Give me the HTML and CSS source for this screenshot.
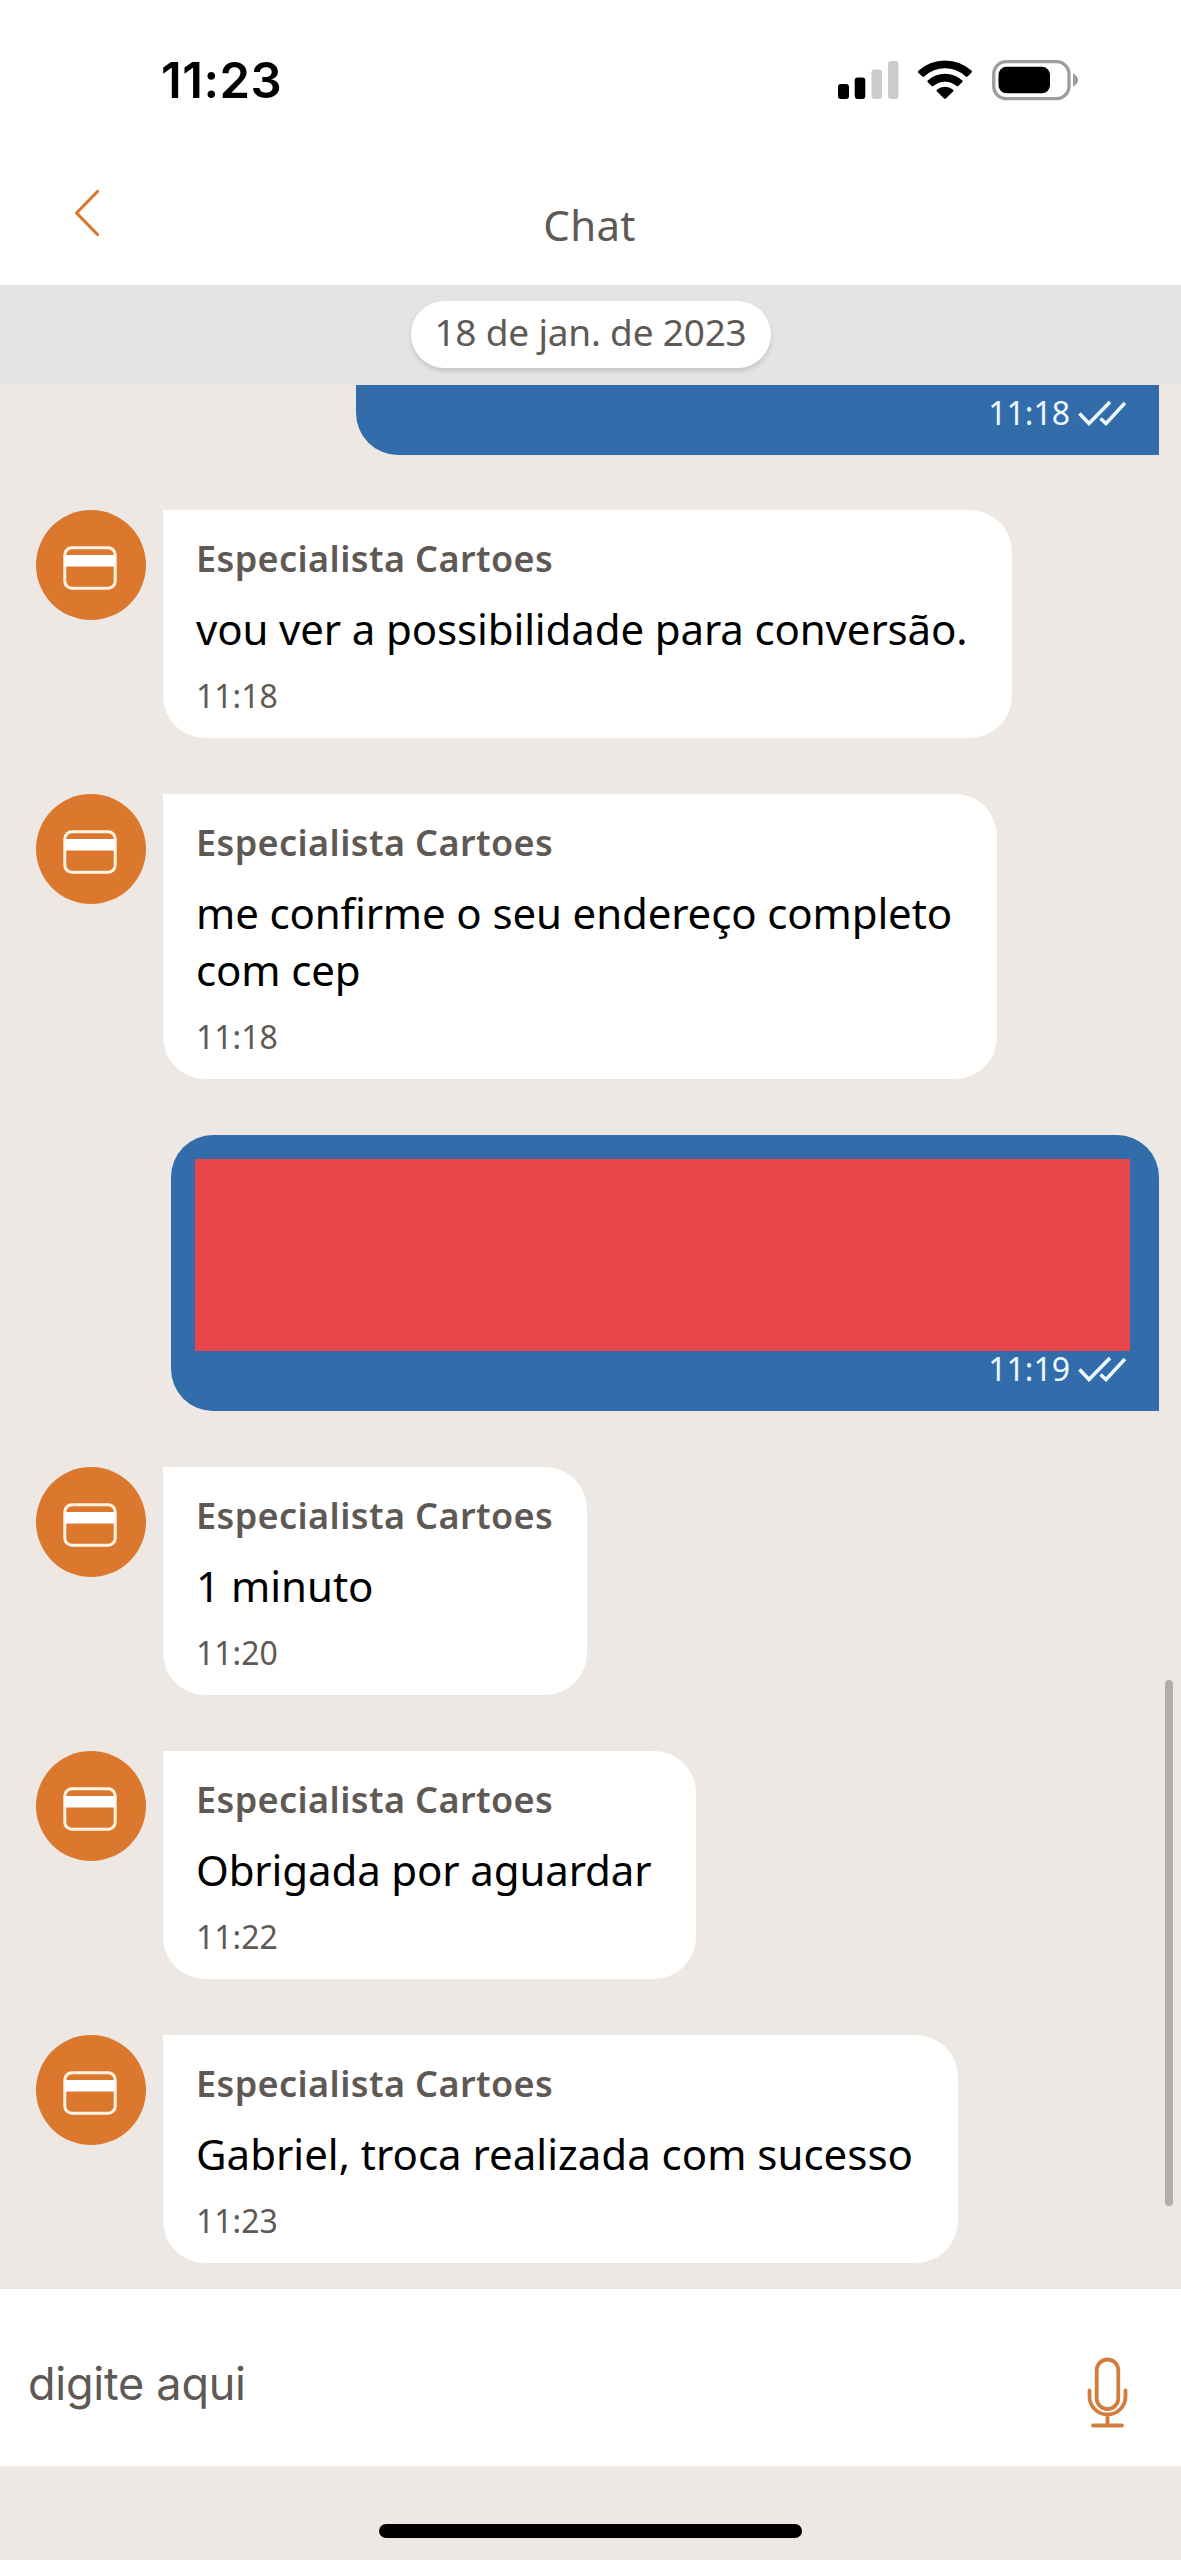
FILE: index.html
```
<!DOCTYPE html>
<html lang="pt-BR">
<head>
    <meta charset="UTF-8">
    <meta name="viewport" content="width=device-width, initial-scale=1.0">
    <title>Chat</title>
    <link rel="stylesheet" href="styles.css">
</head>
<body>

<!-- Shared icons -->
<svg class="icon-defs" width="0" height="0">
    <symbol id="card" viewBox="0 0 54 44">
        <rect x="1.8" y="1.8" width="50.4" height="40.4" rx="7" fill="none" stroke="#fff3e2" stroke-width="3"/>
        <rect x="1.5" y="9" width="51" height="11.5" fill="#fff"/>
    </symbol>
    <symbol id="checks" viewBox="0 0 48 26">
        <path d="M1.5 13.5L11 23.5L32 2M22.5 18.500L28 23.5L47 3" fill="none" stroke="#eef8ff" stroke-width="3.600"/>
    </symbol>
</svg>

<div class="status-bar">
    <span class="clock">11:23</span>
    <div class="status-icons">
        <svg width="60" height="40" viewBox="0 0 60 40">
            <rect x="0" y="24" width="11" height="15" rx="3"/>
            <rect x="16.7" y="17.5" width="10.6" height="21.5" rx="3"/>
            <rect x="33.5" y="9.5" width="10.5" height="29.5" rx="3" fill="#cbcbcb"/>
            <rect x="50" y="1" width="10.5" height="38" rx="3" fill="#cbcbcb"/>
        </svg>
        <svg width="54" height="40" viewBox="0 0 54 40">
            <path d="M0 12.5Q-.4 11.5 .6 10.6Q12 .5 27 .5T53.4 10.6Q54.4 11.5 53.6 12.5L49.6 16.5Q48.8 17.2 47.8 16.4Q38.5 8.3 27 8.3T6.2 16.4Q5.2 17.2 4.4 16.5Z"/>
            <path d="M9.6 21.9Q9 21 9.9 20.2Q17 13.7 27 13.7T44.1 20.2Q45 21 44.4 21.9L40.3 26Q39.5 26.7 38.6 26Q33.5 21.7 27 21.7T15.4 26Q14.5 26.7 13.7 26Z"/>
            <path d="M18.8 31.2Q18.3 30.3 19.1 29.6Q22.5 26.8 27 26.8T34.9 29.6Q35.7 30.3 35.2 31.2L27.9 38.6Q27 39.4 26.1 38.6Z"/>
        </svg>
        <svg width="88" height="40" viewBox="0 0 88 40">
            <rect x="1.700" y="1.700" width="75.3" height="37" rx="12.5" fill="#fff" stroke="#9d9d9d" stroke-width="3.300"/>
            <rect x="6.5" y="6.8" width="51.5" height="26.5" rx="8"/>
            <path d="M81 13.5Q86 16 86 20T81 26.5Z" fill="#9d9d9d"/>
        </svg>
    </div>
</div>

<div class="navbar">
    <svg class="back" width="26" height="48" viewBox="0 0 26 48">
        <path d="M23.5 2.5L2.5 24L23.5 45.5" fill="none" stroke="#d9772f" stroke-width="3.200" stroke-linecap="round" stroke-linejoin="round"/>
    </svg>
    <h1>Chat</h1>
</div>

<div class="date-bar">
    <span class="date">18 de jan. de 2023</span>
</div>

<div class="messages">
    <div class="bubble sent cut">
        <div class="sent-time">11:18 <svg width="48" height="26"><use href="#checks"/></svg></div>
    </div>

    <div class="message">
        <div class="avatar"><svg width="54" height="44"><use href="#card"/></svg></div>
        <div class="bubble received">
            <h2>Especialista Cartoes</h2>
            <p class="snug">vou ver a possibilidade para conversão.</p>
            <span class="time">11:18</span>
        </div>
    </div>

    <div class="message">
        <div class="avatar"><svg width="54" height="44"><use href="#card"/></svg></div>
        <div class="bubble received">
            <h2>Especialista Cartoes</h2>
            <p class="snug">me confirme o seu endereço completo<br>com cep</p>
            <span class="time">11:18</span>
        </div>
    </div>

    <div class="bubble sent">
        <div class="redacted"></div>
        <div class="sent-time">11:19 <svg width="48" height="26"><use href="#checks"/></svg></div>
    </div>

    <div class="message">
        <div class="avatar"><svg width="54" height="44"><use href="#card"/></svg></div>
        <div class="bubble received">
            <h2>Especialista Cartoes</h2>
            <p>1 minuto</p>
            <span class="time">11:20</span>
        </div>
    </div>

    <div class="message">
        <div class="avatar"><svg width="54" height="44"><use href="#card"/></svg></div>
        <div class="bubble received">
            <h2>Especialista Cartoes</h2>
            <p class="snug">Obrigada por aguardar</p>
            <span class="time">11:22</span>
        </div>
    </div>

    <div class="message">
        <div class="avatar"><svg width="54" height="44"><use href="#card"/></svg></div>
        <div class="bubble received">
            <h2>Especialista Cartoes</h2>
            <p>Gabriel, troca realizada com sucesso</p>
            <span class="time">11:23</span>
        </div>
    </div>

    <div class="scrollbar"></div>
</div>

<div class="composer">
    <span class="placeholder">digite aqui</span>
    <svg class="mic" width="42" height="72" viewBox="0 0 42 72">
        <g fill="none" stroke="#d27d3c" stroke-width="3.8" stroke-linecap="round">
            <rect x="9.7" y="2.5" width="21.6" height="49.5" rx="10.8"/>
            <path d="M2.5 33.5V39.5A18 18 0 0 0 38.5 39.5V33.5M20.5 58V68.5M6 68.5H35"/>
        </g>
    </svg>
</div>

<div class="home-area">
    <div class="home-indicator"></div>
</div>

</body>
</html>
```
FILE: styles.css
```
body {
    font-family: "Noto Sans", "Open Sans", sans-serif;
    margin: 0;
    padding: 0;
    height: 2560px;
    display: flex;
    flex-direction: column;
    background-color: #ede8e4;
    color: #5f5955;
}
svg {
    display: block;
}
.icon-defs {
    position: absolute;
}
.status-bar {
    display: flex;
    justify-content: space-between;
    align-items: center;
    height: 160px;
    padding: 0 101px 0 161px;
    background-color: #fff;
    color: #000;
}
.clock {
    font-family: Inter, sans-serif;
    font-size: 49px;
    font-weight: 600;
    letter-spacing: 0.5px;
}
.status-icons {
    display: flex;
    gap: 20px;
    margin-bottom: 1px;
}
.status-icons svg {
    overflow: visible;
}
.navbar {
    display: grid;
    grid-template-columns: 1fr auto 1fr;
    height: 125px;
    padding: 0 76px 0 74px;
    box-sizing: border-box;
    background-color: #fff;
}
.back {
    margin-top: 29px;
}
.navbar h1 {
    margin: 37px 0 0;
    font-size: 42px;
    font-weight: 400;
    line-height: 56px;
    letter-spacing: 0.3px;
}
.date-bar {
    display: flex;
    justify-content: center;
    align-items: flex-start;
    height: 100px;
    padding-top: 16px;
    box-sizing: border-box;
    background-color: #e4e4e4;
}
.date {
    width: 360px;
    height: 67px;
    border-radius: 34px;
    background-color: #fff;
    box-shadow: 0 3px 5px rgba(0, 0, 0, 0.14);
    font-size: 37px;
    line-height: 61px;
    letter-spacing: -0.2px;
    text-align: center;
}
.messages {
    position: relative;
    display: flex;
    flex-direction: column;
    gap: 55.7px;
    height: 1903.6px;
    padding: 0 22px 0 36px;
    box-sizing: border-box;
}
.message {
    display: flex;
    align-items: flex-start;
    gap: 17px;
}
.avatar {
    display: flex;
    justify-content: center;
    align-items: center;
    width: 110px;
    height: 110px;
    padding: 5px 3px 0 0;
    box-sizing: border-box;
    border-radius: 50%;
    background-color: #dc782e;
}
.bubble {
    border-radius: 42px;
    box-sizing: border-box;
}
.received {
    padding: 24px 34px 20.3px 33px;
    border-top-left-radius: 0;
    background-color: #fff;
}
.received h2 {
    margin: 0;
    font-size: 36px;
    font-weight: 600;
    line-height: 50px;
    letter-spacing: 0.4px;
}
.received p {
    margin: 16px 11px 17px 0;
    color: #000;
    font-size: 42px;
    line-height: 57px;
}
.received .snug {
    letter-spacing: -0.13px;
}
.time {
    display: block;
    font-size: 32px;
    line-height: 44px;
}
.sent {
    align-self: flex-end;
    width: 988px;
    height: 276.3px;
    padding: 24px 29px 0 24px;
    border-bottom-right-radius: 0;
    background-color: #326cab;
}
/* Bubble scrolled under the date bar */
.sent.cut {
    width: 803px;
    height: 69.5px;
    padding-top: 10px;
    border-top-left-radius: 0;
    border-top-right-radius: 0;
}
.redacted {
    height: 192px;
    background-color: #e8464a;
}
.sent-time {
    display: flex;
    justify-content: flex-end;
    align-items: center;
    gap: 8px;
    padding-right: 4px;
    color: #eef8ff;
    font-size: 32px;
    line-height: 36px;
}
.scrollbar {
    position: absolute;
    top: 1295px;
    right: 8px;
    width: 8px;
    height: 526px;
    border-radius: 4px;
    background-color: #b1adab;
}
.composer {
    display: flex;
    justify-content: space-between;
    align-items: center;
    height: 177px;
    padding: 14px 52px 0 28px;
    box-sizing: border-box;
    background-color: #fff;
}
.placeholder {
    font-family: Inter, sans-serif;
    font-size: 45px;
    line-height: 56px;
    letter-spacing: -0.25px;
}
.mic {
    margin-top: 18px;
}
.home-area {
    display: flex;
    flex: 1;
    justify-content: center;
    align-items: flex-end;
    padding-bottom: 22px;
}
.home-indicator {
    width: 423px;
    height: 14px;
    border-radius: 7px;
    background-color: #000;
}
```
